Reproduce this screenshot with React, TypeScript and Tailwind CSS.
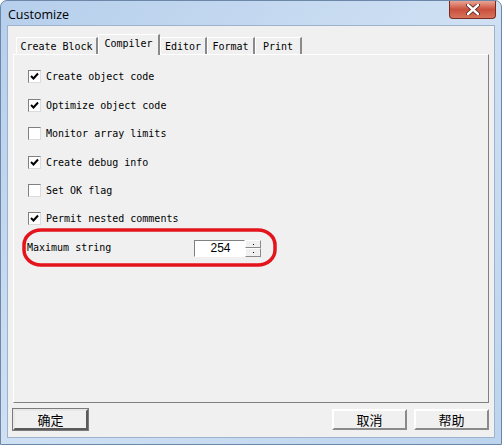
import React from 'react';

const mono = { fontFamily: '"DejaVu Sans Mono", "Liberation Mono", monospace' };
const cjk = { fontFamily: '"Noto Sans CJK SC", "Noto Sans", sans-serif' };

const options = [
  { label: 'Create object code', checked: true },
  { label: 'Optimize object code', checked: true },
  { label: 'Monitor array limits', checked: false },
  { label: 'Create debug info', checked: true },
  { label: 'Set OK flag', checked: false },
  { label: 'Permit nested comments', checked: true },
];

const tabs = [
  { t: 'Create Block', w: 'w-[82px]' },
  { t: 'Compiler', w: 'w-[62px]' },
  { t: 'Editor', w: 'w-[47px]' },
  { t: 'Format', w: 'w-[48px]' },
  { t: 'Print', w: 'w-[47px]' },
];

const Check = ({ checked }: { checked: boolean }) => (
  <div className="w-[13px] h-[13px] bg-white border border-t-[#808080] border-l-[#808080] border-b-[#dcdcdc] border-r-[#dcdcdc] flex items-center justify-center">
    {checked && (
      <svg width="9" height="9" viewBox="0 0 9 9">
        <path d="M1 4 L3.5 6.5 L8 1.5" stroke="#000" strokeWidth="2" fill="none" />
      </svg>
    )}
  </div>
);

const Btn = ({ text, isDefault }: { text: string; isDefault?: boolean }) => (
  <button
    className={`w-[75px] h-[21px] bg-[#f0f0f0] text-[13px] text-black flex items-center justify-center ${
      isDefault
        ? 'border-2 border-t-[#e8e8e8] border-l-[#e8e8e8] border-b-[#5a5a5a] border-r-[#5a5a5a] outline outline-1 outline-[#7a7a7a]'
        : 'border-2 border-t-white border-l-white border-b-[#8a8a8a] border-r-[#8a8a8a]'
    }`}
    style={cjk}
  >
    {text}
  </button>
);

const App = () => {
  return (
    <div className="relative w-[502px] h-[445px] rounded-t-[7px] bg-gradient-to-br from-[#b6cfec] via-[#cfe0f3] to-[#bdd4ee] border border-[#6d87a8] flex flex-col">
      {/* title bar */}
      <div className="h-[26px] flex items-start justify-between pl-[7px]">
        <span className="mt-[5px] text-[12.5px] text-black" style={{ fontFamily: '"Open Sans", "Liberation Sans", sans-serif' }}>
          Customize
        </span>
        <div className="mr-[5px] w-[47px] h-[18px] rounded-b-[4px] border border-[#7a2a20] border-t-0 bg-gradient-to-b from-[#e8a493] via-[#c9503c] to-[#d7735c] flex items-center justify-center">
          <svg width="14" height="11" viewBox="0 0 14 11">
            <path d="M2 1 L12 10 M12 1 L2 10" stroke="#4a1c14" strokeWidth="4" strokeLinecap="round" />
            <path d="M2 1 L12 10 M12 1 L2 10" stroke="#fff" strokeWidth="2.4" strokeLinecap="round" />
          </svg>
        </div>
      </div>

      {/* client area */}
      <div className="flex-1 mx-[6px] mb-[7px] bg-[#f0f0f0] border border-[#9db2cc] flex flex-col px-[5px] pt-[8px] pb-[7px]">
        {/* tabs */}
        <div className="flex items-end h-[20px] pl-[3px] relative z-10">
          {tabs.map((tab, i) =>
            i === 1 ? (
              <div
                key={tab.t}
                className={`${tab.w} h-[21px] -mb-[1px] pt-[1px] text-center bg-[#f0f0f0] border-t border-l border-t-white border-l-white border-r-2 border-r-[#8a8a8a] text-[10px] leading-[16px] text-black`}
                style={mono}
              >
                {tab.t}
              </div>
            ) : (
              <div
                key={tab.t}
                className={`${tab.w} h-[17px] pt-[1px] text-center border-t border-l border-t-white border-l-white border-r-2 border-r-[#8a8a8a] text-[10px] leading-[16px] text-black`}
                style={mono}
              >
                {tab.t}
              </div>
            )
          )}
        </div>

        {/* panel */}
        <div className="h-[349px] border border-t-white border-l-white border-b-[#808080] border-r-[#808080] flex flex-col pl-[14px] pt-[8px]">
          {options.map((o) => (
            <div key={o.label} className="h-[28.4px] flex items-center gap-[5px]">
              <Check checked={o.checked} />
              <span className="text-[10px] text-black" style={mono}>
                {o.label}
              </span>
            </div>
          ))}
          <div className="h-[28.4px] flex items-center -ml-[1px]">
            <span className="w-[167px] text-[10px] text-black" style={mono}>
              Maximum string
            </span>
            <div className="flex h-[17px] mt-[2px]">
              <div className="w-[51px] h-[17px] bg-white border border-t-[#808080] border-l-[#808080] border-b-white border-r-white flex items-center justify-center pl-[2px] text-[12px] text-black" style={{ fontFamily: '"Liberation Sans", sans-serif' }}>
                254
              </div>
              <div className="w-[16px] flex flex-col">
                <div className="h-[8.5px] bg-[#f0f0f0] border border-t-white border-l-white border-b-[#8a8a8a] border-r-[#8a8a8a] flex items-center justify-center">
                  <div className="w-[1px] h-[1px] bg-black" />
                </div>
                <div className="h-[8.5px] bg-[#f0f0f0] border border-t-white border-l-white border-b-[#8a8a8a] border-r-[#8a8a8a] flex items-center justify-center">
                  <div className="w-[1px] h-[1px] bg-black" />
                </div>
              </div>
            </div>
          </div>
        </div>

        {/* buttons */}
        <div className="flex mt-[6px] gap-[7px] items-center">
          <Btn text="确定" isDefault />
          <div className="flex-1" />
          <Btn text="取消" />
          <Btn text="帮助" />
        </div>
      </div>

      {/* red annotation */}
      <svg className="absolute left-0 top-0 pointer-events-none" width="502" height="445">
        <rect x="23" y="229" width="251" height="35" rx="17" ry="15" fill="none" stroke="#e3141c" strokeWidth="3.5" />
      </svg>
    </div>
  );
};

export default App;
